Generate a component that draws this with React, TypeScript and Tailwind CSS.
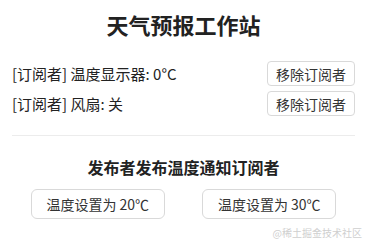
const subscribers = [
  { name: "温度显示器", value: "0°C" },
  { name: "风扇", value: "关" },
]

export default function App() {
  return (
    <div
      className="relative h-[243px] w-[370px] bg-white pl-3 pr-[15px] text-[#222]"
      style={{ fontFamily: '"Noto Sans CJK SC", "Noto Sans", sans-serif' }}
    >
      <h1 className="pt-[9px] text-center text-[22px] leading-[30px] font-bold">天气预报工作站</h1>

      <div className="mt-[22px] flex flex-col gap-[5px]">
        {subscribers.map((s) => (
          <div key={s.name} className="flex items-center justify-between">
            <span className="text-[15px] leading-[25px]">
              [订阅者] {s.name}: {s.value}
            </span>
            <button className="h-[25px] rounded-[4px] border border-[#d9d9d9] bg-white px-2 text-[14px] leading-none text-[#333]">
              移除订阅者
            </button>
          </div>
        ))}
      </div>

      <div className="mt-[19px] h-px bg-[#ececec]" />

      <h2 className="mt-[20px] text-center text-[16px] leading-[22px] font-bold">发布者发布温度通知订阅者</h2>

      <div className="mt-[11px] flex justify-around">
        <button className="h-[30px] w-[134px] rounded-[6px] border border-[#d9d9d9] bg-white text-[14px] leading-none text-[#333]">
          温度设置为 20℃
        </button>
        <button className="h-[30px] w-[134px] rounded-[6px] border border-[#d9d9d9] bg-white text-[14px] leading-none text-[#333]">
          温度设置为 30℃
        </button>
      </div>

      <div className="absolute right-[8px] bottom-[5px] text-[10px] leading-none text-[#cfcfcf]">@稀土掘金技术社区</div>
    </div>
  )
}
